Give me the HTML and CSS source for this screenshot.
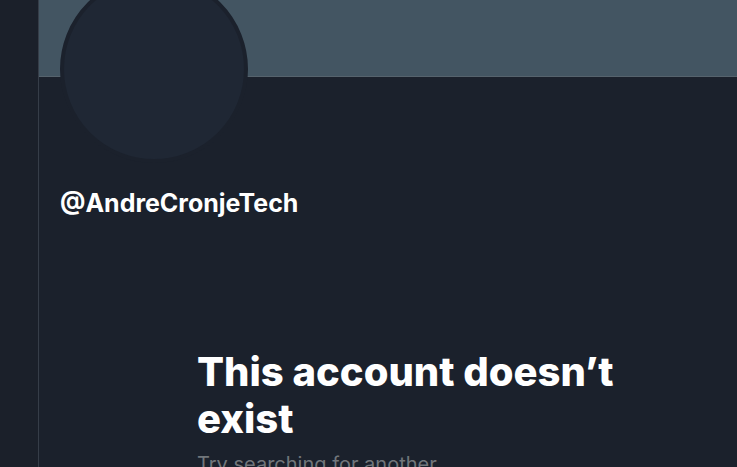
FILE: index.html
```html
<!DOCTYPE html>
<html lang="en">
<head>
    <meta charset="UTF-8">
    <meta name="viewport" content="width=device-width, initial-scale=1.0">
    <title>@AndreCronjeTech</title>
    <link rel="stylesheet" href="styles.css">
</head>
<body>
    <div class="page">
        <div class="side"></div>
        <main class="main">
            <div class="banner"></div>
            <div class="profile">
                <div class="avatar"></div>
                <div class="handle">@AndreCronjeTech</div>
            </div>
            <div class="empty">
                <h1>This account doesn’t exist</h1>
                <p>Try searching for another.</p>
            </div>
        </main>
    </div>
</body>
</html>
```

FILE: styles.css
```css
body {
    margin: 0;
    background: #1b212c;
    font-family: Inter, "Noto Sans", sans-serif;
    color: #fff;
    overflow: hidden;
}
.page {
    display: flex;
    height: 467px;
}
.side {
    width: 38px;
    flex: none;
    background: #1b202a;
    border-right: 1px solid #363d48;
}
.main {
    flex: 1;
    min-width: 0;
}
.banner {
    height: 76px;
    background: #435562;
    border-bottom: 1px solid #56636d;
}
.profile {
    padding-left: 21px;
}
.avatar {
    width: 180px;
    height: 180px;
    margin-top: -102px;
    border-radius: 50%;
    background: #1f2734;
    border: 4px solid #1b212c;
}
.handle {
    margin-top: 25px;
    font-size: 25px;
    font-weight: 700;
}
.empty {
    padding: 130px 0 0 158px;
    max-width: 440px;
}
.empty h1 {
    margin: 0;
    font-size: 40px;
    font-weight: 800;
    line-height: 47px;
}
.empty p {
    margin: 10px 0 0;
    font-size: 20px;
    color: #71767b;
}
```
